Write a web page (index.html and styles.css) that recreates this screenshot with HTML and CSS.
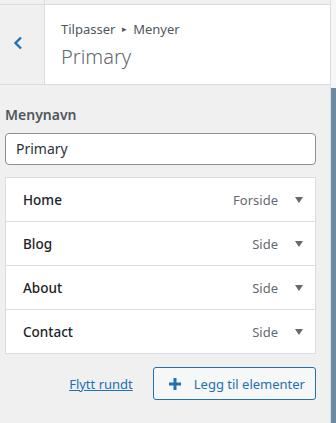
FILE: index.html
```html
<!DOCTYPE html>
<html lang="no">
<head>
<meta charset="utf-8">
<link rel="stylesheet" href="styles.css">
</head>
<body>
<div class="frame">
  <div class="panel">
    <div class="topstrip"><div class="topstrip-left"></div></div>
    <div class="header">
      <button class="back" aria-label="Tilbake">
        <svg width="12" height="14" viewBox="0 0 12 14"><path d="M9 1.5 L3.5 7 L9 12.5" fill="none" stroke="#2271b1" stroke-width="2.4"/></svg>
      </button>
      <div class="title">
        <div class="crumb">Tilpasser <span class="sep">▸</span> Menyer</div>
        <div class="name">Primary</div>
      </div>
    </div>
    <div class="body">
      <label class="label">Menynavn</label>
      <div class="input">Primary</div>
      <ul class="items">
        <li class="item"><span class="item-title">Home</span><span class="item-type">Forside</span><span class="arrow"></span></li>
        <li class="item"><span class="item-title">Blog</span><span class="item-type">Side</span><span class="arrow"></span></li>
        <li class="item"><span class="item-title">About</span><span class="item-type">Side</span><span class="arrow"></span></li>
        <li class="item"><span class="item-title">Contact</span><span class="item-type">Side</span><span class="arrow"></span></li>
      </ul>
      <div class="actions">
        <a class="reorder" href="#">Flytt rundt</a>
        <button class="add">
          <svg width="12" height="12" viewBox="0 0 12 12"><path d="M6 0 V12 M0 6 H12" stroke="#2271b1" stroke-width="3"/></svg>
          <span>Legg til elementer</span>
        </button>
      </div>
    </div>
  </div>
  <div class="preview"><div class="preview-top"></div><div class="preview-main"></div></div>
</div>
</body>
</html>
```
FILE: styles.css
```css
* { box-sizing: border-box; }
html, body { margin: 0; padding: 0; }
body {
  width: 336px; height: 423px; overflow: hidden;
  font-family: "Noto Sans", "Open Sans", sans-serif;
  background: #f0f0f1;
  color: #50575e;
}
.frame { display: flex; height: 423px; }
.panel {
  width: 331px; background: #f0f0f1;
  border-right: 1px solid #dcdcde;
  display: flex; flex-direction: column;
}
.topstrip { height: 5px; border-bottom: 1px solid #dcdcde; display: flex; }
.topstrip-left { width: 45px; border-right: 1px solid #dcdcde; }
.header { display: flex; height: 80px; border-bottom: 1px solid #dcdcde; }
.back {
  width: 45px; border: 0; border-right: 1px solid #dcdcde;
  background: #f0f0f1; padding: 0 8px 3px 0; margin: 0;
  display: flex; align-items: center; justify-content: center;
}
.title { flex: 1; background: #fff; padding: 14px 0 0 16px; }
.crumb { font-size: 13px; line-height: 20px; color: #50575e; }
.sep { font-size: 9px; vertical-align: 2px; margin: 0 3px; }
.name { font-size: 20px; font-weight: 300; line-height: 28px; color: #646970; margin-top: 4px; }
.body { padding: 20px 14px 0 5px; display: flex; flex-direction: column; }
.label { font-size: 14px; font-weight: 600; color: #50575e; line-height: 20px; margin-bottom: 8px; }
.input {
  height: 32px; border: 1px solid #8c8f94; border-radius: 4px; background: #fff;
  font-size: 14px; color: #2c3338; padding: 5px 10px; line-height: 20px;
}
.items {
  list-style: none; margin: 12px 0 0; padding: 0;
  background: #fff; border: 1px solid #dcdcde;
}
.item {
  display: flex; align-items: center; height: 44px; padding: 0 12px 0 17px;
  border-top: 1px solid #dcdcde;
}
.item:first-child { border-top: 0; height: 43px; }
.item-title { flex: 1; font-size: 13.5px; font-weight: 500; color: #1d2327; }
.item-type { font-size: 13px; color: #646970; }
.arrow {
  width: 0; height: 0; margin-left: 17px;
  border-left: 4.5px solid transparent; border-right: 4.5px solid transparent;
  border-top: 6px solid #646970;
}
.actions { display: flex; justify-content: flex-end; align-items: center; margin-top: 13px; gap: 20px; }
.reorder { font-size: 13px; color: #2271b1; text-decoration: underline; }
.add {
  height: 33px; border: 1px solid #2271b1; border-radius: 3px; background: #f6f7f7;
  color: #2271b1; font-family: inherit; font-size: 13px; padding: 0 10px 0 15px;
  display: flex; align-items: center; gap: 13px;
}
.preview { flex: 1; display: flex; flex-direction: column; }
.preview-top { height: 88px; background: #f6f7f7; }
.preview-main { flex: 1; background: #6b8ba3; }
```
